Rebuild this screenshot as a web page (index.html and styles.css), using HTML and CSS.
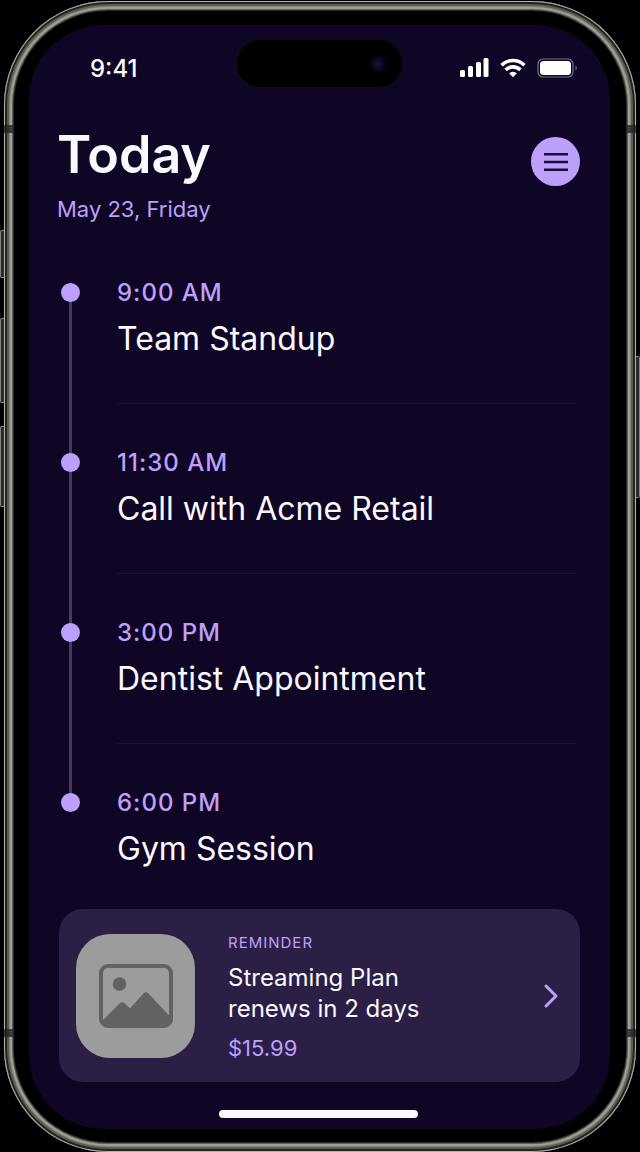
FILE: index.html
```html
<!DOCTYPE html>
<html lang="en">
<head>
    <meta charset="UTF-8">
    <meta name="viewport" content="width=device-width, initial-scale=1">
    <title>Today</title>
    <link rel="stylesheet" href="styles.css">
</head>
<body>
    <div class="phone">
        <span class="side-button action"></span>
        <span class="side-button volume-up"></span>
        <span class="side-button volume-down"></span>
        <span class="side-button power"></span>
        <span class="band top-left"></span>
        <span class="band top-right"></span>
        <span class="band bottom-left"></span>
        <span class="band bottom-right"></span>
        <div class="screen">
            <div class="status-bar">
                <span class="clock">9:41</span>
                <div class="island"><span class="camera"></span></div>
                <div class="status-icons">
                    <svg width="30" height="20" viewBox="0 0 30 20" fill="#fff">
                        <rect x="1" y="12" width="5" height="7" rx="1.5"/>
                        <rect x="9" y="8" width="5" height="11" rx="1.5"/>
                        <rect x="17" y="4" width="5" height="15" rx="1.5"/>
                        <rect x="24.500" y="0" width="5" height="19" rx="1.5"/>
                    </svg>
                    <svg width="26" height="20" viewBox="0 0 26 20" fill="none" stroke="#fff" stroke-width="3.600">
                        <path d="M1.600 7.200a16.200 16.200 0 0 1 22.800 0"/>
                        <path d="M5.600 11.900a10.500 10.500 0 0 1 14.800 0"/>
                        <path d="M13 19.300l-3.900-4a5.600 5.600 0 0 1 7.800 0z" fill="#fff" stroke="none"/>
                    </svg>
                    <svg width="41" height="20" viewBox="0 0 41 20">
                        <rect x="1" y="1" width="35" height="18" rx="5" fill="none" stroke="#77718a" stroke-width="1.200"/>
                        <rect x="3" y="3" width="31" height="14" rx="3.500" fill="#fff"/>
                        <path d="M38.500 7.500c1.700.6 1.700 4.400 0 5z" fill="#77718a"/>
                    </svg>
                </div>
            </div>

            <header class="header">
                <div>
                    <h1>Today</h1>
                    <p class="date">May 23, Friday</p>
                </div>
                <button class="menu-button" type="button" aria-label="Menu">
                    <svg width="24" height="20" viewBox="0 0 24 20" stroke="#1c0c38" stroke-width="2.400">
                        <path d="M0 2.200h24M0 10h24M0 17.800h24"/>
                    </svg>
                </button>
            </header>

            <ul class="timeline">
                <li class="event">
                    <span class="time">9:00 AM</span>
                    <h2>Team Standup</h2>
                </li>
                <li class="event">
                    <span class="time">11:30 AM</span>
                    <h2>Call with Acme Retail</h2>
                </li>
                <li class="event">
                    <span class="time">3:00 PM</span>
                    <h2>Dentist Appointment</h2>
                </li>
                <li class="event">
                    <span class="time">6:00 PM</span>
                    <h2>Gym Session</h2>
                </li>
            </ul>

            <a class="reminder" href="#">
                <span class="thumb">
                    <svg width="74" height="64" viewBox="0 0 74 64">
                        <rect x="2" y="2" width="70" height="60" rx="7" fill="none" stroke="#626262" stroke-width="4"/>
                        <circle cx="20.500" cy="20" r="6.800" fill="#626262"/>
                        <path d="M3 57L20.500 39.500q2.700-2.500 5.400 0L31 44.500 44.500 29.500q2.500-2.700 5 0L71 52.500v4q-1 4.500-6 5.500H9q-5-1-6-5z" fill="#626262"/>
                    </svg>
                </span>
                <span class="reminder-text">
                    <span class="label">Reminder</span>
                    <span class="plan">Streaming Plan<br>renews in 2 days</span>
                    <span class="price">$15.99</span>
                </span>
                <svg class="chevron" width="16" height="26" viewBox="0 0 16 26" fill="none" stroke="#bda0fb" stroke-width="3" stroke-linecap="round" stroke-linejoin="round">
                    <path d="M3 3l10 10L3 23"/>
                </svg>
            </a>

            <div class="home-indicator"></div>
        </div>
    </div>
</body>
</html>
```
FILE: styles.css
```css
* {
    box-sizing: border-box;
}
body {
    margin: 0;
    padding: 1px 4px 0;
    background-color: #000;
    color: #fbf8ff;
    font-family: Inter, "Liberation Sans", Arial, sans-serif;
}
h1, h2, p {
    margin: 0;
}

/* phone body */
.phone {
    position: relative;
    display: flex;
    min-height: calc(100vh - 1px);
    padding: 24px 26px 23px 25px;
    border-radius: 104px;
    background-color: #000;
    box-shadow:
        inset 0 0 0 1px #b5b3ac,
        inset 0 0 0 3px #22221f,
        inset 0 0 0 5px #5c5b55,
        inset 0 0 0 6px #86857e,
        inset 0 0 0 8px #a09e96,
        inset 0 0 0 9px #5f5e58,
        inset 0 0 0 10px #2a2926;
}
.side-button {
    position: absolute;
    left: -4px;
    width: 4px;
    border: 1px solid #85837c;
    border-right: none;
    border-radius: 2px 0 0 2px;
    background-color: #2a2a27;
}
.action {
    top: 229px;
    height: 48px;
}
.volume-up {
    top: 317px;
    height: 85px;
}
.volume-down {
    top: 425px;
    height: 81px;
}
.power {
    top: 355px;
    left: auto;
    right: -4px;
    height: 142px;
    border: 1px solid #85837c;
    border-left: none;
    border-radius: 0 2px 2px 0;
}
.band {
    position: absolute;
    width: 9px;
    height: 8px;
    background-color: rgba(30, 30, 28, 0.75);
}
.top-left {
    top: 124px;
    left: 0;
}
.top-right {
    top: 124px;
    right: 0;
}
.bottom-left {
    bottom: 115px;
    left: 0;
}
.bottom-right {
    bottom: 115px;
    right: 0;
}

/* screen */
.screen {
    flex: 1;
    display: flex;
    flex-direction: column;
    padding: 15px 30px 11px 28px;
    border-radius: 74px;
    background-color: #0f0524;
}
.status-bar {
    display: grid;
    grid-template-columns: 1fr 165px 1fr;
    align-items: center;
    margin-right: -2px;
}
.clock {
    padding: 10px 0 0 33px;
    font-size: 24px;
    font-weight: 500;
    line-height: 32px;
}
.island {
    display: flex;
    align-items: center;
    justify-content: flex-end;
    height: 47px;
    padding-right: 16px;
    border-radius: 24px;
    background-color: #000;
}
.camera {
    width: 16px;
    height: 16px;
    border-radius: 50%;
    background: radial-gradient(circle, #131b48 0, #0a0d26 35%, #05060f 65%, #020204 100%);
}
.status-icons {
    display: flex;
    justify-content: flex-end;
    gap: 11px;
    padding: 8px 4px 0 0;
}

.header {
    display: flex;
    justify-content: space-between;
    align-items: flex-start;
    margin-top: 35px;
}
h1 {
    font-size: 52px;
    font-weight: 600;
    line-height: 66px;
}
.date {
    margin-top: 5px;
    color: #bda0fb;
    font-size: 22px;
    line-height: 32px;
}
.menu-button {
    display: flex;
    align-items: center;
    justify-content: center;
    width: 49px;
    height: 49px;
    margin-top: 15px;
    padding: 0;
    border: none;
    border-radius: 50%;
    background-color: #bda0fb;
    cursor: pointer;
}

/* timeline */
.timeline {
    margin: 52px 3px 0;
    padding: 0;
    list-style: none;
}
.event {
    position: relative;
    height: 170px;
    margin-left: 57px;
}
.event:last-child {
    height: 122px;
}
.event::before {
    content: "";
    position: absolute;
    z-index: 1;
    top: 6px;
    left: -56px;
    width: 19px;
    height: 19px;
    border-radius: 50%;
    background-color: #bda0fb;
}
.event:not(:last-child)::after {
    content: "";
    position: absolute;
    top: 16px;
    left: -48px;
    width: 3px;
    height: 170px;
    background-color: #453b57;
}
.event:not(:last-child) {
    background: linear-gradient(#1b1231, #1b1231) 0 126px / 100% 1px no-repeat;
}
.time {
    display: block;
    color: #bda0fb;
    font-size: 24px;
    font-weight: 500;
    letter-spacing: 1px;
    line-height: 32px;
}
h2 {
    margin-top: 9px;
    font-size: 32px;
    font-weight: 400;
    line-height: 42px;
}

/* reminder card */
.reminder {
    display: flex;
    align-items: center;
    margin-left: 2px;
    padding: 18px 21px 18px 17px;
    border-radius: 24px;
    background-color: #2b1f45;
    color: inherit;
    text-decoration: none;
}
.thumb {
    display: flex;
    align-items: center;
    justify-content: center;
    width: 119px;
    height: 124px;
    border-radius: 34px;
    background-color: #9c9c9c;
}
.reminder-text {
    flex: 1;
    display: flex;
    flex-direction: column;
    margin-left: 33px;
}
.label {
    color: #bda0fb;
    font-size: 15px;
    letter-spacing: 1px;
    line-height: 32px;
    text-transform: uppercase;
}
.plan {
    margin-top: 3px;
    font-size: 24px;
    line-height: 31px;
}
.price {
    margin-top: 8px;
    color: #bda0fb;
    font-size: 22px;
    line-height: 32px;
}
.home-indicator {
    align-self: center;
    width: 199px;
    height: 8px;
    margin-top: auto;
    border-radius: 4px;
    background-color: #fbf8ff;
}
```
